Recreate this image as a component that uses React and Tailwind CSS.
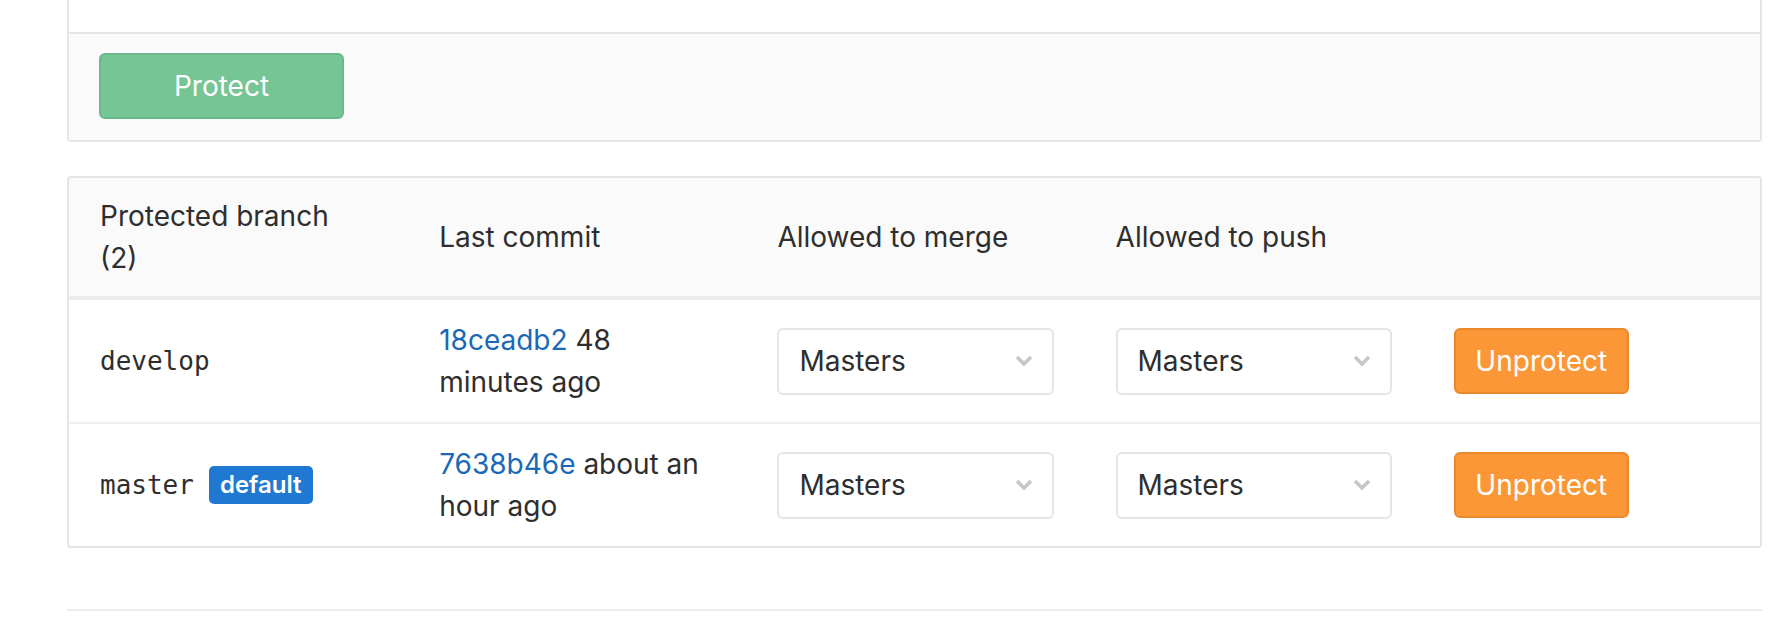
import React from "react";

const SANS = { fontFamily: 'Inter, "Liberation Sans", sans-serif' };
const MONO = { fontFamily: '"DejaVu Sans Mono", "Liberation Mono", monospace' };

const branches = [
  { name: "develop", sha: "18ceadb2", when: "48 minutes ago", isDefault: false },
  { name: "master", sha: "7638b46e", when: "about an hour ago", isDefault: true },
];

const Chevron = () => (
  <svg width="20" height="14" viewBox="0 0 20 14" className="shrink-0">
    <polyline points="3,3 10,10 17,3" fill="none" stroke="#c6c6c6" strokeWidth="3.5" />
  </svg>
);

const AccessSelect = ({ value }) => (
  <div className="flex h-[67px] w-full items-center justify-between rounded-[6px] border-2 border-[#e5e5e5] bg-white pl-[20px] pr-[18px]">
    <span className="text-[28px] text-[#2e2e2e]">{value}</span>
    <Chevron />
  </div>
);

const App = () => {
  return (
    <div className="min-h-[630px] bg-white text-[#2e2e2e]" style={SANS}>
      <div className="ml-[67px] mr-[20px]">
        {/* create form, cut off at the top */}
        <div className="rounded-b-[4px] border-2 border-t-0 border-[#e5e5e5]">
          <div className="h-[32px] bg-white" />
          <div className="border-t-2 border-[#e5e5e5] bg-[#fafafa] pb-[21px] pl-[30px] pt-[19px]">
            <button className="h-[66px] w-[245px] rounded-[6px] border-2 border-[#6bb98a] bg-[#76c595] text-[28px] text-white">
              Protect
            </button>
          </div>
        </div>

        {/* protected branches list */}
        <div className="mt-[34px] overflow-hidden rounded-[4px] border-2 border-[#e5e5e5]">
          <table className="w-full table-fixed border-collapse text-left text-[28px] leading-[42px]">
            <thead>
              <tr className="border-b-4 border-[#ececec] bg-[#fafafa]">
                <th className="py-[17px] pl-[31px] pr-[40px] font-normal">Protected branch (2)</th>
                <th className="py-[17px] pl-[32px] pr-[30px] font-normal">Last commit</th>
                <th className="py-[17px] pl-[32px] pr-[30px] font-normal">Allowed to merge</th>
                <th className="py-[17px] pl-[32px] pr-[30px] font-normal">Allowed to push</th>
                <th className="py-[17px] pl-[32px] pr-[30px] font-normal" />
              </tr>
            </thead>
            <tbody>
              {branches.map((b, i) => (
                <tr key={b.name} className={i > 0 ? "border-t-2 border-[#efefef]" : ""}>
                  <td className="px-[31px] py-[19px] align-middle">
                    <div className="flex items-center gap-[15px]">
                      <span className="text-[26px]" style={MONO}>{b.name}</span>
                      {b.isDefault && (
                        <span className="rounded-[5px] bg-[#1f78d1] px-[11px] text-[24px] font-semibold leading-[38px] text-white">
                          default
                        </span>
                      )}
                    </div>
                  </td>
                  <td className="py-[19px] pl-[32px] pr-[30px] align-middle">
                    <a href="#" className="text-[#1b69b6]">{b.sha}</a> {b.when}
                  </td>
                  <td className="py-[19px] pl-[32px] pr-[30px] align-middle">
                    <AccessSelect value="Masters" />
                  </td>
                  <td className="py-[19px] pl-[32px] pr-[30px] align-middle">
                    <AccessSelect value="Masters" />
                  </td>
                  <td className="py-[19px] pl-[32px] pr-[30px] align-middle">
                    <button className="h-[66px] w-[175px] rounded-[6px] border-2 border-[#e88a2c] bg-[#fb9736] text-[28px] text-white">
                      Unprotect
                    </button>
                  </td>
                </tr>
              ))}
            </tbody>
          </table>
        </div>

        <div className="mt-[61px] border-t-2 border-[#ececec]" />
      </div>
    </div>
  );
};

export default App;
